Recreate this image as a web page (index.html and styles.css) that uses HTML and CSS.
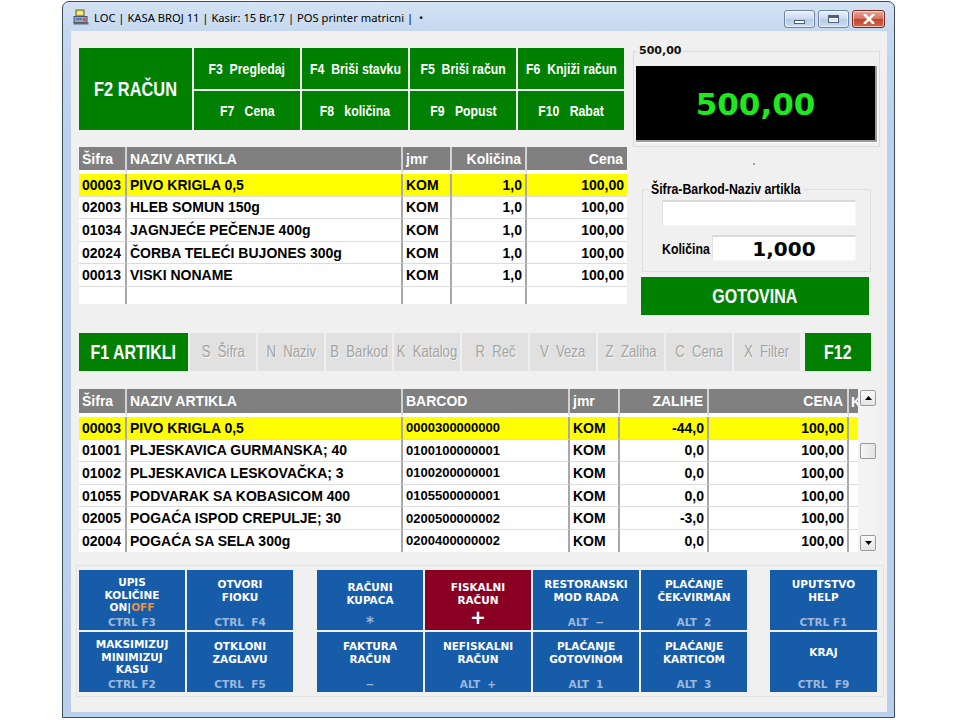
FILE: index.html
```html
<!DOCTYPE html>
<html>
<head>
<meta charset="utf-8">
<title>Kasa</title>
<link rel="stylesheet" href="styles.css">
</head>
<body>
<div class="window">
  <div class="titlebar">
    <svg class="appicon" width="16" height="16" viewBox="0 0 16 16">
      <rect x="3" y="1" width="8" height="6" fill="#e6d640" stroke="#6b6420" stroke-width="1"/>
      <rect x="4.5" y="2.5" width="5" height="3" fill="#f7f0a0"/>
      <rect x="1" y="7.5" width="13" height="6" fill="#9aa6b8" stroke="#4a5668" stroke-width="1"/>
      <rect x="3" y="9" width="6" height="2" fill="#4f7fd0"/>
      <rect x="10.5" y="9" width="2" height="3" fill="#d04040"/>
      <rect x="0.5" y="13.5" width="15" height="2" fill="#5d6878"/>
    </svg>
    <span class="title">LOC | KASA BROJ 11 | Kasir: 15 Br.17 | POS printer matricni |  •</span>
    <div class="caption">
      <div class="cbtn"><span class="minglyph"></span></div>
      <div class="cbtn"><span class="maxglyph"></span></div>
      <div class="cbtn close">
        <svg width="12" height="10" viewBox="0 0 12 10"><path d="M2 1 L10 9 M10 1 L2 9" stroke="#fff" stroke-width="2.6" stroke-linecap="square"/></svg>
      </div>
    </div>
  </div>

  <div class="client">
    <div class="top">
      <div class="leftcol">
        <div class="fgrid">
          <div class="gbtn big"><span class="nw">F2 RAČUN</span></div>
          <div class="gbtn"><span class="nw">F3  Pregledaj</span></div>
          <div class="gbtn"><span class="nw">F4  Briši stavku</span></div>
          <div class="gbtn"><span class="nw">F5  Briši račun</span></div>
          <div class="gbtn"><span class="nw">F6  Knjiži račun</span></div>
          <div class="gbtn"><span class="nw">F7   Cena</span></div>
          <div class="gbtn"><span class="nw">F8   količina</span></div>
          <div class="gbtn"><span class="nw">F9   Popust</span></div>
          <div class="gbtn"><span class="nw">F10   Rabat</span></div>
        </div>
        <div class="grid1">
          <table class="tbl">
            <colgroup>
              <col class="w48"><col class="w276"><col class="w49"><col class="w75"><col class="w100">
            </colgroup>
            <thead>
              <tr><th>Šifra</th><th>NAZIV ARTIKLA</th><th>jmr</th><th class="r">Količina</th><th class="r">Cena</th></tr>
            </thead>
            <tbody>
              <tr class="sel"><td>00003</td><td>PIVO KRIGLA 0,5</td><td>KOM</td><td class="r">1,0</td><td class="r">100,00</td></tr>
              <tr><td>02003</td><td>HLEB SOMUN 150g</td><td>KOM</td><td class="r">1,0</td><td class="r">100,00</td></tr>
              <tr><td>01034</td><td>JAGNJEĆE PEČENJE 400g</td><td>KOM</td><td class="r">1,0</td><td class="r">100,00</td></tr>
              <tr><td>02024</td><td>ČORBA TELEĆI BUJONES 300g</td><td>KOM</td><td class="r">1,0</td><td class="r">100,00</td></tr>
              <tr><td>00013</td><td>VISKI NONAME</td><td>KOM</td><td class="r">1,0</td><td class="r">100,00</td></tr>
              <tr class="filler"><td></td><td></td><td></td><td></td><td></td></tr>
            </tbody>
          </table>
        </div>
      </div>

      <div class="rightcol">
        <fieldset class="totalbox">
          <legend>500,00</legend>
          <div class="display">500,00</div>
        </fieldset>
        <div class="dotrow"><span class="dot"></span></div>
        <fieldset class="entry">
          <legend><span class="nw left">Šifra-Barkod-Naziv artikla</span></legend>
          <div class="entryinner">
            <div class="inp wide"></div>
            <div class="qtyrow">
              <span class="qlabel"><span class="nw left">Količina</span></span>
              <div class="inp qty">1,000</div>
            </div>
          </div>
        </fieldset>
        <div class="gotovina"><span class="nw">GOTOVINA</span></div>
      </div>
    </div>

    <div class="f1row">
      <div class="gbtn f1"><span class="nw">F1 ARTIKLI</span></div>
      <div class="sbtn"><span class="nw">S  Šifra</span></div>
      <div class="sbtn"><span class="nw">N  Naziv</span></div>
      <div class="sbtn"><span class="nw">B  Barkod</span></div>
      <div class="sbtn"><span class="nw">K  Katalog</span></div>
      <div class="sbtn"><span class="nw">R  Reč</span></div>
      <div class="sbtn"><span class="nw">V  Veza</span></div>
      <div class="sbtn"><span class="nw">Z  Zaliha</span></div>
      <div class="sbtn"><span class="nw">C  Cena</span></div>
      <div class="sbtn"><span class="nw">X  Filter</span></div>
      <div class="gbtn f12"><span class="nw">F12</span></div>
    </div>

    <div class="grid2wrap">
      <div class="grid2">
        <table class="tbl">
          <colgroup>
            <col class="w48"><col class="w276"><col class="w167"><col class="w50"><col class="w89"><col class="w140"><col class="w9">
          </colgroup>
          <thead>
            <tr><th>Šifra</th><th>NAZIV ARTIKLA</th><th>BARCOD</th><th>jmr</th><th class="r">ZALIHE</th><th class="r">CENA</th><th class="k"><span class="kk">K</span></th></tr>
          </thead>
          <tbody>
            <tr class="sel"><td>00003</td><td>PIVO KRIGLA 0,5</td><td class="bc">0000300000000</td><td>KOM</td><td class="r">-44,0</td><td class="r">100,00</td><td></td></tr>
            <tr><td>01001</td><td>PLJESKAVICA GURMANSKA; 40</td><td class="bc">0100100000001</td><td>KOM</td><td class="r">0,0</td><td class="r">100,00</td><td></td></tr>
            <tr><td>01002</td><td>PLJESKAVICA LESKOVAČKA; 3</td><td class="bc">0100200000001</td><td>KOM</td><td class="r">0,0</td><td class="r">100,00</td><td></td></tr>
            <tr><td>01055</td><td>PODVARAK SA KOBASICOM 400</td><td class="bc">0105500000001</td><td>KOM</td><td class="r">0,0</td><td class="r">100,00</td><td></td></tr>
            <tr><td>02005</td><td>POGAĆA ISPOD CREPULJE; 30</td><td class="bc">0200500000002</td><td>KOM</td><td class="r">-3,0</td><td class="r">100,00</td><td></td></tr>
            <tr><td>02004</td><td>POGAĆA SA SELA 300g</td><td class="bc">0200400000002</td><td>KOM</td><td class="r">0,0</td><td class="r">100,00</td><td></td></tr>
          </tbody>
        </table>
      </div>
      <div class="vscroll">
        <div class="sarrow"><svg width="7" height="4" viewBox="0 0 7 4"><path d="M0 4 L3.5 0 L7 4Z" fill="#000"/></svg></div>
        <div class="strack"><div class="thumb"></div></div>
        <div class="sarrow"><svg width="7" height="4" viewBox="0 0 7 4"><path d="M0 0 L3.5 4 L7 0Z" fill="#000"/></svg></div>
      </div>
    </div>

    <div class="bottom">
      <div class="bgroup">
        <div class="bbtn"><div class="lbl three">UPIS<br>KOLIČINE<br>ON|<span class="off">OFF</span></div><div class="sc">CTRL F3</div></div>
        <div class="bbtn"><div class="lbl">OTVORI<br>FIOKU</div><div class="sc">CTRL  F4</div></div>
        <div class="bbtn"><div class="lbl three">MAKSIMIZUJ<br>MINIMIZUJ<br>KASU</div><div class="sc">CTRL F2</div></div>
        <div class="bbtn"><div class="lbl">OTKLONI<br>ZAGLAVU</div><div class="sc">CTRL  F5</div></div>
      </div>
      <div class="bgroup four">
        <div class="bbtn"><div class="lbl low">RAČUNI<br>KUPACA</div><div class="sc star">*</div></div>
        <div class="bbtn red"><div class="lbl low">FISKALNI<br>RAČUN</div><div class="sc plus">+</div></div>
        <div class="bbtn"><div class="lbl">RESTORANSKI<br>MOD RADA</div><div class="sc">ALT  −</div></div>
        <div class="bbtn"><div class="lbl">PLAĆANJE<br>ČEK-VIRMAN</div><div class="sc">ALT  2</div></div>
        <div class="bbtn"><div class="lbl">FAKTURA<br>RAČUN</div><div class="sc">−</div></div>
        <div class="bbtn"><div class="lbl">NEFISKALNI<br>RAČUN</div><div class="sc">ALT  +</div></div>
        <div class="bbtn"><div class="lbl">PLAĆANJE<br>GOTOVINOM</div><div class="sc">ALT  1</div></div>
        <div class="bbtn"><div class="lbl">PLAĆANJE<br>KARTICOM</div><div class="sc">ALT  3</div></div>
      </div>
      <div class="bgroup one">
        <div class="bbtn"><div class="lbl">UPUTSTVO<br>HELP</div><div class="sc">CTRL F1</div></div>
        <div class="bbtn"><div class="lbl single">KRAJ</div><div class="sc">CTRL  F9</div></div>
      </div>
    </div>
  </div>
</div>
</body>
</html>
```
FILE: styles.css
```css
* { box-sizing: border-box; }

body {
  margin: 0;
  background: #ffffff;
  font-family: "Liberation Sans", Arial, sans-serif;
}

/* Arial Narrow look-alike: Liberation Sans condensed horizontally */
.nw {
  display: inline-block;
  transform: scaleX(0.82);
  white-space: pre;
}
.nw.left { transform-origin: 0 50%; }

.window {
  margin: 1px 0 0 62px;
  width: 833px;
  height: 717px;
  border: 1px solid #3d4b5c;
  border-radius: 7px 7px 0 0;
  background: linear-gradient(#d4e3f5, #c4d8ef 30px, #bcd2ec 120px, #b9cfea);
  padding: 0 7px 5px 8px;
  display: flex;
  flex-direction: column;
}

/* ---------- title bar ---------- */
.titlebar {
  height: 29px;
  display: flex;
  align-items: center;
}
.appicon { margin-left: 2px; margin-top: 1px; flex: none; }
.title {
  margin-left: 5px;
  font-family: "Noto Sans", "Open Sans", sans-serif;
  font-size: 11.2px;
  color: #000;
  white-space: pre;
  flex: 1;
  margin-top: 2px;
}
.caption {
  display: flex;
  gap: 3px;
  align-self: flex-start;
  margin-top: 8px;
  margin-right: 2px;
}
.cbtn {
  width: 31px;
  height: 18px;
  border: 1px solid #6c84a4;
  border-radius: 3px;
  background: linear-gradient(#e9f1fb, #c8d8ee 50%, #b7cbe6 51%, #cbdcf1);
  display: flex;
  align-items: center;
  justify-content: center;
  box-shadow: inset 0 0 0 1px rgba(255,255,255,0.6);
}
.cbtn.close {
  width: 33px;
  border-color: #7a2a22;
  background: linear-gradient(#e9a89a, #d4705e 50%, #c2442e 51%, #d4674f);
}
.minglyph {
  width: 11px; height: 4px;
  margin-top: 5px;
  background: #fff;
  border: 1px solid #4b5e7a;
}
.maxglyph {
  width: 11px; height: 8px;
  border: 1px solid #4b5e7a;
  border-top-width: 3px;
  background: #dbe6f4;
  box-shadow: inset 0 0 0 1px #fff;
}

/* ---------- client ---------- */
.client {
  height: 681px;
  background: #f0f0f0;
  display: flex;
  flex-direction: column;
}

.top {
  height: 302px;
  display: flex;
  padding: 12px 0 0 8px;
}
.leftcol { width: 548px; padding-top: 5px; }

.gbtn {
  background: #008000;
  color: #fff;
  font-family: "Liberation Sans", Arial, sans-serif;
  font-weight: bold;
  font-size: 15px;
  display: flex;
  align-items: center;
  justify-content: center;
  white-space: pre;
}
.fgrid {
  display: grid;
  grid-template-columns: 113px repeat(4, 106px);
  grid-template-rows: 41px 39px;
  gap: 2px;
}
.gbtn.big {
  grid-row: span 2;
  font-size: 20px;
}

.grid1 {
  margin-top: 17px;
  height: 157px;
  background: #fff;
  overflow: hidden;
}
.tbl {
  table-layout: fixed;
  border-collapse: separate;
  border-spacing: 0;
  font-family: "Liberation Sans", Arial, sans-serif;
  font-weight: bold;
  font-size: 14px;
  color: #000;
}
.grid1 .tbl { width: 548px; height: 157px; }
.w48 { width: 48px; } .w276 { width: 276px; } .w49 { width: 49px; }
.w75 { width: 75px; } .w100 { width: 100px; } .w167 { width: 167px; }
.w50 { width: 50px; } .w89 { width: 89px; } .w140 { width: 140px; } .w9 { width: 9px; }

.tbl th {
  background: #808080;
  color: #fff;
  text-align: left;
  height: 27px;
  padding: 0 4px 0 3px;
  border-right: 2px solid #d2d2d2;
  border-bottom: 4px solid #fff;
  white-space: nowrap;
  overflow: hidden;
}
.tbl td {
  height: 22.6px;
  padding: 0 3px;
  border-right: 2px solid #a8a8a8;
  border-bottom: 1px solid #dcdcdc;
  white-space: nowrap;
  overflow: hidden;
}
.tbl th:last-child, .tbl td:last-child { border-right: none; }
.tbl .r { text-align: right; }
.tbl tr.sel td { background: #ffff00; }
.tbl tr.filler td { height: auto; border-bottom: none; }
.tbl td.bc { font-size: 13px; }
.tbl th.k { padding: 0 0 0 2px; }
.kk { display: inline-block; width: 7px; overflow: hidden; vertical-align: middle; }

/* ---------- right column ---------- */
.rightcol {
  width: 247px;
  margin-left: 6px;
  display: flex;
  flex-direction: column;
}
.totalbox {
  margin: 1px 0 0 0;
  border: 1px solid #dcdcdc;
  padding: 0 2px 4px 2px;
}
.totalbox legend {
  margin-left: 1px;
  padding: 0 2px;
  font-family: "DejaVu Sans", sans-serif;
  font-weight: bold;
  font-size: 11px;
  line-height: 14px;
  color: #111;
}
.display {
  margin-top: 8px;
  height: 76px;
  background: #000;
  color: #1ee81e;
  font-family: "DejaVu Sans", Verdana, sans-serif;
  font-weight: bold;
  font-size: 31px;
  display: flex;
  align-items: center;
  justify-content: center;
  border-right: 2px solid #9a9a9a;
  border-bottom: 2px solid #9a9a9a;
  box-shadow: 1px 1px 0 #fff;
  padding-top: 2px;
}
.dotrow {
  height: 34px;
  display: flex;
  align-items: center;
  justify-content: center;
}
.dot { width: 2px; height: 2px; background: #a0a0a0; margin-left: -6px; margin-top: -1px; }

.entry {
  margin: 0 9px;
  border: 1px solid #dedede;
  padding: 0 6px 10px 6px;
}
.entry legend {
  padding: 0 2px;
  font-family: "Liberation Sans", Arial, sans-serif;
  font-weight: bold;
  font-size: 15px;
  line-height: 16px;
  color: #000;
}
.entry legend .nw { margin-right: -33px; }
.entryinner { padding: 3px 0 0 13px; }
.inp {
  background: #fff;
  border-top: 2px solid #dadada;
  border-left: 1px solid #e2e2e2;
  border-right: 1px solid #f6f6f6;
  border-bottom: 1px solid #f6f6f6;
  height: 26px;
}
.inp.wide { width: 194px; }
.qtyrow {
  margin-top: 9px;
  display: flex;
  align-items: center;
}
.qlabel {
  width: 50px;
  font-family: "Liberation Sans", Arial, sans-serif;
  font-weight: bold;
  font-size: 15px;
  color: #000;
  white-space: nowrap;
}
.inp.qty {
  width: 144px;
  display: flex;
  align-items: center;
  justify-content: center;
  font-family: "DejaVu Sans", Verdana, sans-serif;
  font-weight: bold;
  font-size: 20px;
  color: #000;
}
.gotovina {
  margin: 5px 0 0 8px;
  width: 228px;
  height: 38px;
  background: #008000;
  color: #fff;
  font-family: "Liberation Sans", Arial, sans-serif;
  font-weight: bold;
  font-size: 19.5px;
  display: flex;
  align-items: center;
  justify-content: center;
}

/* ---------- F1 row ---------- */
.f1row {
  height: 38px;
  display: flex;
  gap: 2px;
  padding-left: 8px;
}
.gbtn.f1 { width: 109px; font-size: 19.5px; }
.gbtn.f12 { width: 66px; font-size: 19.5px; margin-left: 3px; }
.sbtn {
  width: 66px;
  background: #e1e1e1;
  color: #a3a3a3;
  font-family: "Liberation Sans", Arial, sans-serif;
  font-size: 16px;
  display: flex;
  align-items: center;
  justify-content: center;
  white-space: pre;
  text-shadow: 1px 1px 0 #f6f6f6;
}

/* ---------- table 2 ---------- */
.grid2wrap {
  margin: 18px 0 0 8px;
  height: 163px;
  display: flex;
}
.grid2 {
  width: 779px;
  height: 163px;
  overflow: hidden;
  background: #fff;
}
.grid2 .tbl { width: 779px; }
.grid2 .tbl th { height: 28px; }
.vscroll {
  width: 19px;
  height: 163px;
  background: #f3f3f3;
  display: flex;
  flex-direction: column;
  padding: 1px 1px 1px 2px;
}
.sarrow {
  height: 16px;
  background: linear-gradient(#fafafa, #e4e4e4);
  border: 1px solid #9a9a9a;
  border-radius: 2px;
  display: flex;
  align-items: center;
  justify-content: center;
}
.strack { flex: 1; padding-top: 37px; }
.thumb {
  height: 16px;
  background: linear-gradient(90deg, #f6f6f6, #e2e2e2);
  border: 1px solid #9a9a9a;
  border-radius: 2px;
}

/* ---------- bottom buttons ---------- */
.bottom {
  margin: 13px 0 0 5px;
  width: 808px;
  height: 132px;
  border: 1px solid #e2e2e2;
  padding: 4px 2px 0 2px;
  display: flex;
  gap: 23px;
}
.bgroup {
  display: grid;
  grid-template-columns: repeat(2, 106px);
  grid-template-rows: 60px 60px;
  gap: 2px;
}
.bgroup.four { grid-template-columns: repeat(4, 106px); margin-left: 1px; }
.bgroup.one { grid-template-columns: 107px; }
.bbtn {
  background: #175ca8;
  color: #fff;
  font-family: "DejaVu Sans", Verdana, sans-serif;
  font-weight: bold;
  font-size: 10.5px;
  line-height: 12.5px;
  text-align: center;
  display: flex;
  flex-direction: column;
  padding: 8px 0 1px;
}
.bbtn.red { background: #8a0022; }
.lbl.three { margin-top: -2px; }
.lbl.low { margin-top: 3px; }
.lbl.single { margin-top: 6px; }
.off { color: #e8944a; }
.sc {
  margin-top: auto;
  color: #9db8dc;
  height: 13px;
  line-height: 12px;
  white-space: pre;
}
.sc.plus { color: #fff; font-size: 19px; line-height: 12px; margin-bottom: 5px; }
.sc.star { font-size: 15px; line-height: 15px; }
```
